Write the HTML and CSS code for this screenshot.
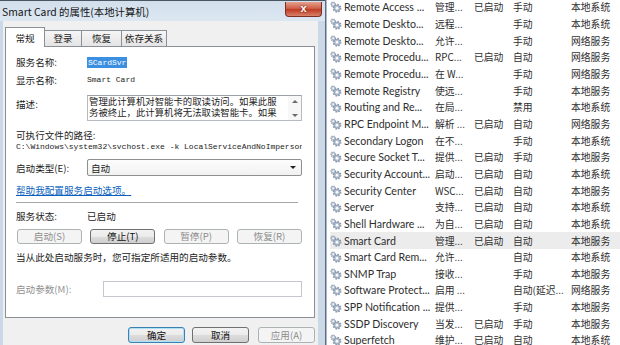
FILE: index.html
```html
<!DOCTYPE html>
<html lang="zh-CN">
  <head>
    <meta charset="UTF-8" />
    <meta name="viewport" content="width=device-width, initial-scale=1.0" />
    <title>Smart Card 的属性</title>
    <link rel="stylesheet" href="styles.css">
  </head>
  <body>
    <svg class="defs" width="0" height="0">
      <symbol id="gear" viewBox="0 0 12 12">
        <circle cx="7" cy="7.2" r="3.6" fill="none" stroke="#8293a9" stroke-width="1.7" stroke-dasharray="1.4 1.43" />
        <circle cx="7" cy="7.2" r="3.1" fill="#b8c4d3" stroke="#75879e" stroke-width="0.6" />
        <circle cx="7" cy="7.2" r="1.2" fill="#fff" />
        <circle cx="3.2" cy="3.3" r="2.3" fill="none" stroke="#8d9db2" stroke-width="1.3" stroke-dasharray="1 1.03" />
        <circle cx="3.2" cy="3.3" r="1.9" fill="#c9d3df" stroke="#8091a7" stroke-width="0.5" />
        <circle cx="3.2" cy="3.3" r="0.7" fill="#fff" />
      </symbol>
    </svg>
    <div class="desk">
      <div class="dialog">
        <div class="titlebar">
          <span class="title">Smart Card 的属性(本地计算机)</span>
          <span class="close">x</span>
        </div>
        <div class="frame">
          <div class="client">
            <div class="tabs">
              <span class="tab active">常规</span>
              <span class="tab t-login">登录</span>
              <span class="tab t-recover">恢复</span>
              <span class="tab t-deps">依存关系</span>
            </div>
            <div class="page">
              <div class="row r-name">
                <span class="label">服务名称:</span>
                <span class="mono sel">SCardSvr</span>
              </div>
              <div class="row r-display">
                <span class="label">显示名称:</span>
                <span class="mono">Smart Card</span>
              </div>
              <div class="row r-desc">
                <span class="label">描述:</span>
                <div class="memo">
                  <div class="memo-text">管理此计算机对智能卡的取读访问。如果此服<br>务被终止，此计算机将无法取读智能卡。如果</div>
                  <div class="memo-scroll">
                    <span class="arrow-up"></span>
                    <span class="arrow-down"></span>
                  </div>
                </div>
              </div>
              <div class="row r-path-label">可执行文件的路径:</div>
              <div class="row r-path mono">C:\Windows\system32\svchost.exe -k LocalServiceAndNoImpersonation</div>
              <div class="row r-type">
                <span class="label">启动类型(E):</span>
                <div class="combo">
                  <span>自动</span>
                  <span class="arrow-down dark"></span>
                </div>
              </div>
              <div class="row r-link"><a class="link">帮助我配置服务启动选项。</a></div>
              <div class="sep"></div>
              <div class="row r-status">
                <span class="label">服务状态:</span>
                <span>已启动</span>
              </div>
              <div class="row r-buttons">
                <span class="btn disabled">启动(S)</span>
                <span class="btn">停止(T)</span>
                <span class="btn disabled">暂停(P)</span>
                <span class="btn disabled">恢复(R)</span>
              </div>
              <div class="row r-hint">当从此处启动服务时，您可指定所适用的启动参数。</div>
              <div class="row r-params">
                <span class="label wide grey">启动参数(M):</span>
                <span class="field"></span>
              </div>
            </div>
            <div class="actions">
              <span class="btn default">确定</span>
              <span class="btn">取消</span>
              <span class="btn disabled">应用(A)</span>
            </div>
          </div>
        </div>
      </div>

      <div class="services">
        <div class="svc"><svg class="ico"><use href="#gear"/></svg><span class="c-name">Remote Access ...</span><span class="c-desc">管理...</span><span class="c-status">已启动</span><span class="c-type">手动</span><span class="c-logon">本地系统</span></div>
        <div class="svc"><svg class="ico"><use href="#gear"/></svg><span class="c-name">Remote Deskto...</span><span class="c-desc">远程...</span><span class="c-status"></span><span class="c-type">手动</span><span class="c-logon">本地系统</span></div>
        <div class="svc"><svg class="ico"><use href="#gear"/></svg><span class="c-name">Remote Deskto...</span><span class="c-desc">允许...</span><span class="c-status"></span><span class="c-type">手动</span><span class="c-logon">网络服务</span></div>
        <div class="svc"><svg class="ico"><use href="#gear"/></svg><span class="c-name">Remote Procedu...</span><span class="c-desc">RPC...</span><span class="c-status">已启动</span><span class="c-type">自动</span><span class="c-logon">网络服务</span></div>
        <div class="svc"><svg class="ico"><use href="#gear"/></svg><span class="c-name">Remote Procedu...</span><span class="c-desc">在 W...</span><span class="c-status"></span><span class="c-type">手动</span><span class="c-logon">网络服务</span></div>
        <div class="svc"><svg class="ico"><use href="#gear"/></svg><span class="c-name">Remote Registry</span><span class="c-desc">使远...</span><span class="c-status"></span><span class="c-type">手动</span><span class="c-logon">本地服务</span></div>
        <div class="svc"><svg class="ico"><use href="#gear"/></svg><span class="c-name">Routing and Re...</span><span class="c-desc">在局...</span><span class="c-status"></span><span class="c-type">禁用</span><span class="c-logon">本地系统</span></div>
        <div class="svc"><svg class="ico"><use href="#gear"/></svg><span class="c-name">RPC Endpoint M...</span><span class="c-desc">解析 ...</span><span class="c-status">已启动</span><span class="c-type">自动</span><span class="c-logon">网络服务</span></div>
        <div class="svc"><svg class="ico"><use href="#gear"/></svg><span class="c-name">Secondary Logon</span><span class="c-desc">在不...</span><span class="c-status"></span><span class="c-type">手动</span><span class="c-logon">本地系统</span></div>
        <div class="svc"><svg class="ico"><use href="#gear"/></svg><span class="c-name">Secure Socket T...</span><span class="c-desc">提供...</span><span class="c-status">已启动</span><span class="c-type">手动</span><span class="c-logon">本地服务</span></div>
        <div class="svc"><svg class="ico"><use href="#gear"/></svg><span class="c-name">Security Account...</span><span class="c-desc">启动...</span><span class="c-status">已启动</span><span class="c-type">自动</span><span class="c-logon">本地系统</span></div>
        <div class="svc"><svg class="ico"><use href="#gear"/></svg><span class="c-name">Security Center</span><span class="c-desc">WSC...</span><span class="c-status">已启动</span><span class="c-type">自动</span><span class="c-logon">本地服务</span></div>
        <div class="svc"><svg class="ico"><use href="#gear"/></svg><span class="c-name">Server</span><span class="c-desc">支持...</span><span class="c-status">已启动</span><span class="c-type">自动</span><span class="c-logon">本地系统</span></div>
        <div class="svc"><svg class="ico"><use href="#gear"/></svg><span class="c-name">Shell Hardware ...</span><span class="c-desc">为自...</span><span class="c-status">已启动</span><span class="c-type">自动</span><span class="c-logon">本地系统</span></div>
        <div class="svc current"><svg class="ico"><use href="#gear"/></svg><span class="c-name">Smart Card</span><span class="c-desc">管理...</span><span class="c-status">已启动</span><span class="c-type">自动</span><span class="c-logon">本地服务</span></div>
        <div class="svc"><svg class="ico"><use href="#gear"/></svg><span class="c-name">Smart Card Rem...</span><span class="c-desc">允许...</span><span class="c-status"></span><span class="c-type">自动</span><span class="c-logon">本地系统</span></div>
        <div class="svc"><svg class="ico"><use href="#gear"/></svg><span class="c-name">SNMP Trap</span><span class="c-desc">接收...</span><span class="c-status"></span><span class="c-type">手动</span><span class="c-logon">本地服务</span></div>
        <div class="svc"><svg class="ico"><use href="#gear"/></svg><span class="c-name">Software Protect...</span><span class="c-desc">启用 ...</span><span class="c-status"></span><span class="c-type">自动(延迟...</span><span class="c-logon">网络服务</span></div>
        <div class="svc"><svg class="ico"><use href="#gear"/></svg><span class="c-name">SPP Notification ...</span><span class="c-desc">提供...</span><span class="c-status"></span><span class="c-type">手动</span><span class="c-logon">本地服务</span></div>
        <div class="svc"><svg class="ico"><use href="#gear"/></svg><span class="c-name">SSDP Discovery</span><span class="c-desc">当发...</span><span class="c-status">已启动</span><span class="c-type">手动</span><span class="c-logon">本地服务</span></div>
        <div class="svc"><svg class="ico"><use href="#gear"/></svg><span class="c-name">Superfetch</span><span class="c-desc">维护...</span><span class="c-status">已启动</span><span class="c-type">自动</span><span class="c-logon">本地系统</span></div>
      </div>
    </div>
  </body>
</html>
```

FILE: styles.css
```css
html,
body {
  margin: 0;
  height: 100%;
}
body {
  background: #fff;
  overflow: hidden;
  font-family: "Noto Sans CJK SC", sans-serif;
  color: #1c1c1c;
}
.defs {
  position: absolute;
}
.desk {
  display: flex;
  width: 620px;
  height: 345px;
}

/* dialog window */
.dialog {
  width: 325px;
  flex: none;
  display: flex;
  flex-direction: column;
  background: #cad8e7;
  border-right: 1px solid #5f6d7e;
}
.titlebar {
  height: 21px;
  display: flex;
  align-items: flex-start;
  background: linear-gradient(#d3dfec, #dce7f2);
  border-top: 1px solid #4a5562;
  box-sizing: border-box;
}
.title {
  font-size: 10.4px;
  line-height: 12px;
  padding: 5px 0 0 2px;
  color: #151515;
}
.close {
  margin-left: auto;
  margin-right: 3px;
  margin-top: 1px;
  width: 37px;
  height: 15px;
  box-sizing: border-box;
  border: 1px solid #7d2f26;
  border-top: none;
  border-radius: 0 0 4px 4px;
  background: linear-gradient(#e3a18f, #d06049 45%, #bf3b24 55%, #d9836b);
  color: #fff;
  font-family: "Liberation Sans", sans-serif;
  font-weight: bold;
  font-size: 11px;
  line-height: 12px;
  text-align: center;
  text-shadow: 0 0 2px #5a1208;
}
.frame {
  flex: 1;
  display: flex;
  min-width: 0;
  padding: 0 7px 0 3px;
}
.client {
  flex: 1;
  min-width: 0;
  background: #f0f0f0;
  padding: 6px 3px 0 2px;
}

/* tabs */
.tabs {
  display: flex;
  align-items: flex-end;
  height: 20px;
  margin-bottom: -1px;
  font-size: 9.6px;
}
.tab {
  height: 16px;
  margin-bottom: 1px;
  margin-left: -1px;
  box-sizing: border-box;
  border: 1px solid #8b8f98;
  border-bottom: none;
  background: linear-gradient(#f6f6f6, #e4e4e4);
  text-align: center;
  line-height: 15px;
}
.tab.active {
  position: relative;
  z-index: 1;
  width: 40px;
  height: 20px;
  margin: 0;
  background: #fff;
  line-height: 21px;
}
.t-login {
  width: 38px;
}
.t-recover {
  width: 41px;
}
.t-deps {
  width: 46px;
}

/* general page */
.page {
  height: 272px;
  box-sizing: border-box;
  background: #fff;
  border: 1px solid #8b8f98;
  padding: 9px 12px 0 10px;
  font-size: 9.6px;
}
.row {
  display: flex;
  align-items: center;
  line-height: 12px;
  white-space: nowrap;
  min-width: 0;
}
.label {
  width: 71px;
  flex: none;
}
.label.wide {
  width: 87px;
}
.grey {
  color: #8f8f8f;
}
.mono {
  font-family: "Liberation Mono", monospace;
  font-size: 8px;
}
.sel {
  background: #3a8fe0;
  color: #fff;
  padding: 0 1px;
  line-height: 11px;
}
.r-display {
  margin-top: 6px;
}
.r-desc {
  margin-top: 9px;
  align-items: flex-start;
}
.r-desc .label {
  padding-top: 3px;
}
.memo {
  flex: 1;
  min-width: 0;
  height: 26px;
  display: flex;
  box-sizing: border-box;
  border: 1px solid #b5b9c0;
  border-top-color: #9ca1aa;
  overflow: hidden;
}
.memo-text {
  flex: 1;
  min-width: 0;
  padding-left: 1px;
  font-size: 9.4px;
  line-height: 11px;
  white-space: nowrap;
  overflow: hidden;
}
.memo-scroll {
  width: 13px;
  flex: none;
  background: #f7f7f7;
  display: flex;
  flex-direction: column;
  align-items: center;
  justify-content: space-between;
  padding: 4px 0 3px;
  box-sizing: border-box;
}
.arrow-up,
.arrow-down {
  width: 0;
  height: 0;
  border-left: 3px solid transparent;
  border-right: 3px solid transparent;
}
.arrow-up {
  border-bottom: 3px solid #6b6b6b;
}
.arrow-down {
  border-top: 3px solid #6b6b6b;
}
.arrow-down.dark {
  border-top-color: #222;
}
.r-path-label {
  margin-top: 8px;
}
.r-path {
  display: block;
  overflow: hidden;
}
.r-type {
  margin-top: 6px;
}
.combo {
  flex: 1;
  height: 17px;
  box-sizing: border-box;
  border: 1px solid #8e8f8f;
  border-radius: 2px;
  background: linear-gradient(#fdfdfd, #f1f1f1);
  display: flex;
  align-items: center;
  justify-content: space-between;
  padding: 0 5px 0 3px;
}
.r-link {
  margin-top: 8px;
}
.link {
  color: #0b5fbf;
  text-decoration: underline;
}
.sep {
  margin: 6px 4px 0 0;
  height: 1px;
  background: #a6a6a6;
  border-bottom: 1px solid #fff;
}
.r-status {
  margin-top: 6px;
}
.r-buttons {
  margin-top: 7px;
  justify-content: space-between;
  padding-left: 1px;
}
.r-hint {
  margin-top: 7px;
}
.r-params {
  margin-top: 18px;
}
.field {
  flex: 1;
  height: 16px;
  box-sizing: border-box;
  border: 1px solid #c4c8ce;
  background: #fff;
}

/* push buttons */
.btn {
  width: 65px;
  height: 15px;
  box-sizing: border-box;
  border: 1px solid #707070;
  border-radius: 3px;
  background: linear-gradient(#f2f2f2, #ebebeb 50%, #dddddd 50%, #cfcfcf);
  text-align: center;
  line-height: 13px;
  font-size: 9.6px;
  color: #111;
}
.btn.disabled {
  border-color: #adb2b5;
  background: #f4f4f4;
  color: #8d8d8d;
}
.btn.default {
  border-color: #3c7fb1;
  box-shadow: inset 0 0 0 1px #aee0f7;
}
.actions {
  display: flex;
  justify-content: flex-end;
  margin-top: 9px;
}
.actions .btn {
  width: 57px;
  height: 16px;
  line-height: 14px;
  margin-left: 7px;
}
.actions .btn.disabled {
  margin-left: 9px;
}

/* services list */
.services {
  flex: 1;
  border-left: 1px solid #a9b7c8;
  padding-left: 3px;
  overflow: hidden;
}
.svc {
  display: flex;
  align-items: center;
  height: 16.67px;
  font-size: 9.8px;
  color: #2e2e2e;
  white-space: nowrap;
}
.svc:first-child {
  margin-top: -1px;
}
.svc.current {
  background: #ececec;
}
.ico {
  width: 12px;
  height: 12px;
  flex: none;
  margin-right: 2px;
}
.c-name {
  width: 91px;
  font-family: Lato, "Noto Sans CJK SC", sans-serif;
  font-size: 10.6px;
}
.c-desc {
  width: 39px;
}
.c-status {
  width: 39px;
}
.c-type {
  width: 58px;
}
```
